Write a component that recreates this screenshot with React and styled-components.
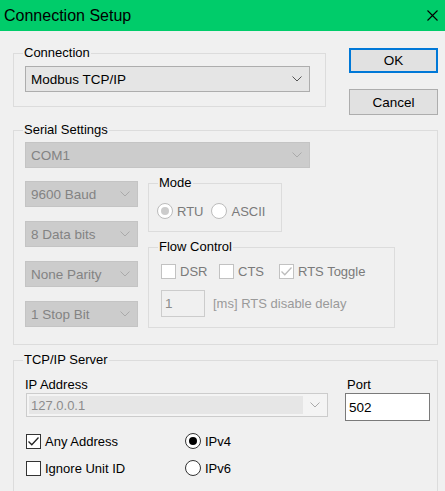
import React from 'react';
import styled, { createGlobalStyle } from 'styled-components';

const GlobalStyle = createGlobalStyle`
  html, body {
    margin: 0;
    padding: 0;
    background: #f0f0f0;
  }
`;

const Window = styled.div`
  width: 445px;
  height: 491px;
  overflow: hidden;
  background: #f0f0f0;
  font-family: "Liberation Sans", Arial, sans-serif;
  font-size: 13px;
  color: #000;
`;

const TitleBar = styled.div`
  height: 31px;
  background: #00cc6a;
  display: flex;
  align-items: center;
  justify-content: space-between;
  padding: 0 7px 0 4px;
  font-size: 16px;
`;

const Body = styled.div`
  display: flex;
  flex-direction: column;
  padding-left: 13px;
`;

const TopRow = styled.div`
  display: flex;
  align-items: flex-start;
`;

const Group = styled.div`
  position: relative;
  box-sizing: border-box;
  width: ${(p) => p.$w}px;
  height: ${(p) => p.$h}px;
  margin-top: ${(p) => p.$mt || 0}px;
  border: 1px solid #dcdcdc;
  padding: ${(p) => p.$pad};
`;

const Legend = styled.span`
  position: absolute;
  top: -9px;
  left: 9px;
  padding: 0 1px;
  line-height: 15px;
  background: #f0f0f0;
`;

const ButtonCol = styled.div`
  display: flex;
  flex-direction: column;
  gap: 16px;
  margin: 17px 0 0 23px;
`;

const Button = styled.button`
  box-sizing: border-box;
  width: 89px;
  height: ${(p) => (p.$default ? 25 : 26)}px;
  padding: 0;
  background: #e1e1e1;
  border: ${(p) => (p.$default ? '2px solid #0078d7' : '1px solid #adadad')};
  font-family: inherit;
  font-size: 13.5px;
  color: #000;
`;

const ComboBox = styled.div`
  box-sizing: border-box;
  width: ${(p) => p.$w}px;
  height: ${(p) => p.$h || 26}px;
  display: flex;
  align-items: center;
  justify-content: space-between;
  padding: 0 7px 0 5px;
  background: ${(p) => (p.$disabled ? '#cccccc' : '#e5e5e5')};
  border: 1px solid ${(p) => (p.$disabled ? '#c4c4c4' : '#adadad')};
  color: ${(p) => (p.$disabled ? '#838383' : '#000')};
  font-size: 13.5px;
`;

const EditCombo = styled.div`
  box-sizing: border-box;
  width: 302px;
  height: 24px;
  margin-left: 1px;
  display: flex;
  align-items: center;
  padding: 2px 7px 2px 2px;
  background: #f4f4f4;
  border: 1px solid #cccccc;
`;

const EditArea = styled.div`
  flex: 1;
  height: 100%;
  display: flex;
  align-items: center;
  padding-left: 2px;
  margin-right: 7px;
  background: #e6e6e6;
  color: #8c8c8c;
`;

const SerialColumns = styled.div`
  display: flex;
  align-items: flex-start;
  margin-top: 13px;
`;

const ComboCol = styled.div`
  display: flex;
  flex-direction: column;
  gap: 14px;
`;

const SideCol = styled.div`
  display: flex;
  flex-direction: column;
  margin: 2px 0 0 10px;
`;

const OptionRow = styled.div`
  display: flex;
  align-items: center;
  gap: ${(p) => p.$gap || 0}px;
`;

const Option = styled.label`
  display: flex;
  align-items: center;
  gap: 4px;
  width: ${(p) => (p.$w ? `${p.$w}px` : 'auto')};
  height: 16px;
  color: ${(p) => (p.$disabled ? '#7a7a7a' : '#000')};
`;

const Box = styled.span`
  box-sizing: border-box;
  width: 15px;
  height: 15px;
  display: flex;
  align-items: center;
  justify-content: center;
  background: #fff;
  border: 1px solid ${(p) => (p.$disabled ? '#c2c2c2' : '#333')};
`;

const Circle = styled.span`
  box-sizing: border-box;
  width: 16px;
  height: 16px;
  border-radius: 50%;
  display: flex;
  align-items: center;
  justify-content: center;
  background: #fff;
  border: 1px solid ${(p) => (p.$disabled ? '#bcbcbc' : '#333')};
`;

const Dot = styled.span`
  width: 8px;
  height: 8px;
  border-radius: 50%;
  background: ${(p) => (p.$disabled ? '#cccccc' : '#000')};
`;

const DelayRow = styled.div`
  display: flex;
  align-items: center;
  gap: 8px;
  margin-top: 11px;
`;

const Edit = styled.div`
  box-sizing: border-box;
  width: ${(p) => p.$w}px;
  height: ${(p) => p.$h}px;
  display: flex;
  align-items: center;
  padding-left: 3px;
  background: ${(p) => (p.$disabled ? '#f0f0f0' : '#fff')};
  border: 1px solid ${(p) => (p.$disabled ? '#cccccc' : '#7a7a7a')};
  color: ${(p) => (p.$disabled ? '#8c8c8c' : '#000')};
  font-size: 13.5px;
`;

const Note = styled.span`
  color: #9a9a9a;
`;

const ServerTop = styled.div`
  display: flex;
  align-items: flex-start;
  gap: 17px;
`;

const Field = styled.div`
  display: flex;
  flex-direction: column;
  gap: 1px;
`;

const FieldLabel = styled.span`
  line-height: 15px;
  padding-left: ${(p) => p.$pl || 0}px;
`;

const OptionGrid = styled.div`
  display: grid;
  grid-template-columns: 159px auto;
  row-gap: 11px;
  margin: 12px 0 0 1px;
`;

const Chevron = ({ disabled }) => (
  <svg width="10" height="6" viewBox="0 0 10 6">
    <path d="M0.5 0.5 L5 5 L9.5 0.5" fill="none" stroke={disabled ? '#aaaaaa' : '#555555'} strokeWidth="1" />
  </svg>
);

const Combo = ({ children, w, h, disabled }) => (
  <ComboBox $w={w} $h={h} $disabled={disabled}>
    <span>{children}</span>
    <Chevron disabled={disabled} />
  </ComboBox>
);

const Check = ({ label, checked, disabled, w }) => (
  <Option $disabled={disabled} $w={w}>
    <Box $disabled={disabled}>
      {checked && (
        <svg width="13" height="13" viewBox="0 0 13 13">
          <path d="M1.5 6.5 L4.8 9.8 L11.5 2.5" fill="none" stroke={disabled ? '#bcbcbc' : '#222'} strokeWidth="1.3" />
        </svg>
      )}
    </Box>
    {label}
  </Option>
);

const Radio = ({ label, checked, disabled }) => (
  <Option $disabled={disabled}>
    <Circle $disabled={disabled}>{checked && <Dot $disabled={disabled} />}</Circle>
    {label}
  </Option>
);

export default function App() {
  return (
    <>
      <GlobalStyle />
      <Window>
        <TitleBar>
          <span>Connection Setup</span>
          <svg width="11" height="11" viewBox="0 0 11 11">
            <path d="M0.5 0.5 L10.5 10.5 M10.5 0.5 L0.5 10.5" stroke="#000" strokeWidth="1.1" />
          </svg>
        </TitleBar>
        <Body>
          <TopRow>
            <Group $w={313} $h={54} $mt={22} $pad="12px 0 0 11px">
              <Legend>Connection</Legend>
              <Combo w={285}>Modbus TCP/IP</Combo>
            </Group>
            <ButtonCol>
              <Button $default>OK</Button>
              <Button>Cancel</Button>
            </ButtonCol>
          </TopRow>

          <Group $w={425} $h={215} $mt={15} $pad="11px 0 0 11px">
            <Legend>Serial Settings</Legend>
            <Combo w={285} disabled>COM1</Combo>
            <SerialColumns>
              <ComboCol>
                <Combo w={113} disabled>9600 Baud</Combo>
                <Combo w={113} disabled>8 Data bits</Combo>
                <Combo w={113} disabled>None Parity</Combo>
                <Combo w={113} disabled>1 Stop Bit</Combo>
              </ComboCol>
              <SideCol>
                <Group $w={134} $h={49} $pad="19px 0 0 8px">
                  <Legend>Mode</Legend>
                  <OptionRow $gap={8}>
                    <Radio label="RTU" checked disabled />
                    <Radio label="ASCII" disabled />
                  </OptionRow>
                </Group>
                <Group $w={247} $h={81} $mt={15} $pad="15px 0 0 12px">
                  <Legend>Flow Control</Legend>
                  <OptionRow>
                    <Check label="DSR" disabled w={58} />
                    <Check label="CTS" disabled w={60} />
                    <Check label="RTS Toggle" checked disabled />
                  </OptionRow>
                  <DelayRow>
                    <Edit $w={44} $h={27} $disabled>1</Edit>
                    <Note>[ms] RTS disable delay</Note>
                  </DelayRow>
                </Group>
              </SideCol>
            </SerialColumns>
          </Group>

          <Group $w={425} $h={150} $mt={15} $pad="16px 0 0 11px">
            <Legend>TCP/IP Server</Legend>
            <ServerTop>
              <Field>
                <FieldLabel>IP Address</FieldLabel>
                <EditCombo>
                  <EditArea>127.0.0.1</EditArea>
                  <Chevron disabled />
                </EditCombo>
              </Field>
              <Field>
                <FieldLabel $pl={2}>Port</FieldLabel>
                <Edit $w={85} $h={28}>502</Edit>
              </Field>
            </ServerTop>
            <OptionGrid>
              <Check label="Any Address" checked />
              <Radio label="IPv4" checked />
              <Check label="Ignore Unit ID" />
              <Radio label="IPv6" />
            </OptionGrid>
          </Group>
        </Body>
      </Window>
    </>
  );
}
